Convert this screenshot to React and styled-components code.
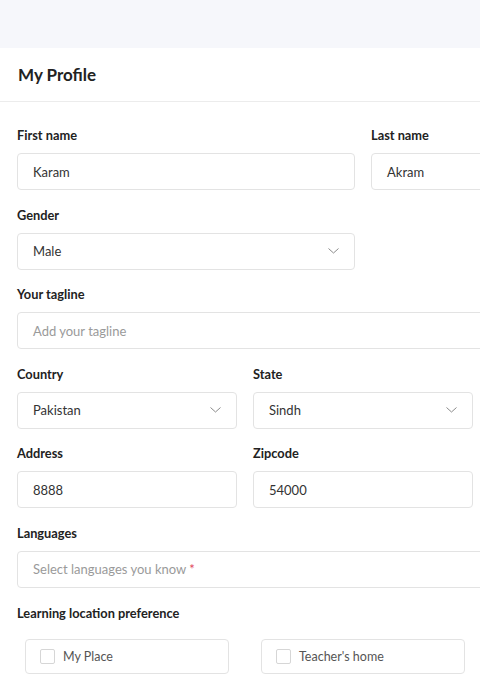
import React from 'react'
import styled, { createGlobalStyle } from 'styled-components';

const Global = createGlobalStyle`
    html, body {
        margin: 0;
        padding: 0;
        overflow: hidden;
        background: #ffffff;
        font-family: Lato, "Open Sans", sans-serif;
    }
    * { box-sizing: border-box; }
`

const Page = styled.div`
    width: 726px;
    min-height: 700px;
    background: #ffffff;
`

const TopBand = styled.div`
    height: 48px;
    background: #f6f7fb;
`

const Header = styled.div`
    height: 54px;
    padding: 0 18px;
    display: flex;
    align-items: center;
    border-bottom: 1px solid #ececec;

    h1 {
        margin: 0;
        font-size: 17px;
        font-weight: 700;
        color: #222;
    }
`

const Form = styled.div`
    padding: 25px 17px 0;
    display: flex;
    flex-direction: column;
    gap: 16.6px;
`

const Row = styled.div`
    display: grid;
    grid-template-columns: repeat(${p => p.cols}, 1fr);
    column-gap: 16px;
`

const Field = styled.div`
    display: flex;
    flex-direction: column;
`

const Label = styled.label`
    font-size: 12.8px;
    line-height: 16px;
    font-weight: 700;
    color: #222;
    margin-bottom: 10px;
`

const Box = styled.div`
    height: 37px;
    border: 1px solid #e3e3e3;
    border-radius: 4px;
    padding: 0 15px;
    display: flex;
    align-items: center;
    justify-content: space-between;
    font-size: 13px;
    color: ${p => p.placeholder ? '#9a9a9a' : '#333'};
`

const Star = styled.span`
    color: #e0475b;
    margin-left: 3px;
`

const Chevron = () => (
    <svg width="11" height="6" viewBox="0 0 11 6" fill="none">
        <path d="M0.5 0.5 L5.5 5 L10.5 0.5" stroke="#8a8a8a" strokeWidth="1" />
    </svg>
)

const Options = styled.div`
    display: grid;
    grid-template-columns: repeat(3, 1fr);
    column-gap: 16px;
`

const OptionCell = styled.div`
    padding: 8px;
`

const Option = styled.div`
    height: 35px;
    border: 1px solid #e3e3e3;
    border-radius: 4px;
    display: flex;
    align-items: center;
    padding: 0 14px;
    gap: 8px;
    font-size: 12.5px;
    color: #555;
`

const Check = styled.span`
    width: 15px;
    height: 15px;
    border: 1px solid #d6d6d6;
    border-radius: 2px;
    background: #fff;
`

function App() {
    return (
        <Page>
            <Global />
            <TopBand />
            <Header><h1>My Profile</h1></Header>
            <Form>
                <Row cols={2}>
                    <Field>
                        <Label>First name</Label>
                        <Box>Karam</Box>
                    </Field>
                    <Field>
                        <Label>Last name</Label>
                        <Box>Akram</Box>
                    </Field>
                </Row>
                <Row cols={2}>
                    <Field>
                        <Label>Gender</Label>
                        <Box>Male <Chevron /></Box>
                    </Field>
                </Row>
                <Row cols={1}>
                    <Field>
                        <Label>Your tagline</Label>
                        <Box placeholder>Add your tagline</Box>
                    </Field>
                </Row>
                <Row cols={3}>
                    <Field>
                        <Label>Country</Label>
                        <Box>Pakistan <Chevron /></Box>
                    </Field>
                    <Field>
                        <Label>State</Label>
                        <Box>Sindh <Chevron /></Box>
                    </Field>
                </Row>
                <Row cols={3}>
                    <Field>
                        <Label>Address</Label>
                        <Box>8888</Box>
                    </Field>
                    <Field>
                        <Label>Zipcode</Label>
                        <Box>54000</Box>
                    </Field>
                </Row>
                <Row cols={1}>
                    <Field>
                        <Label>Languages</Label>
                        <Box placeholder><span>Select languages you know<Star>*</Star></span></Box>
                    </Field>
                </Row>
                <Field>
                    <Label>Learning location preference</Label>
                    <Options>
                        <OptionCell>
                            <Option><Check /> My Place</Option>
                        </OptionCell>
                        <OptionCell>
                            <Option><Check /> Teacher's home</Option>
                        </OptionCell>
                    </Options>
                </Field>
            </Form>
        </Page>
    );
}

export default App;
